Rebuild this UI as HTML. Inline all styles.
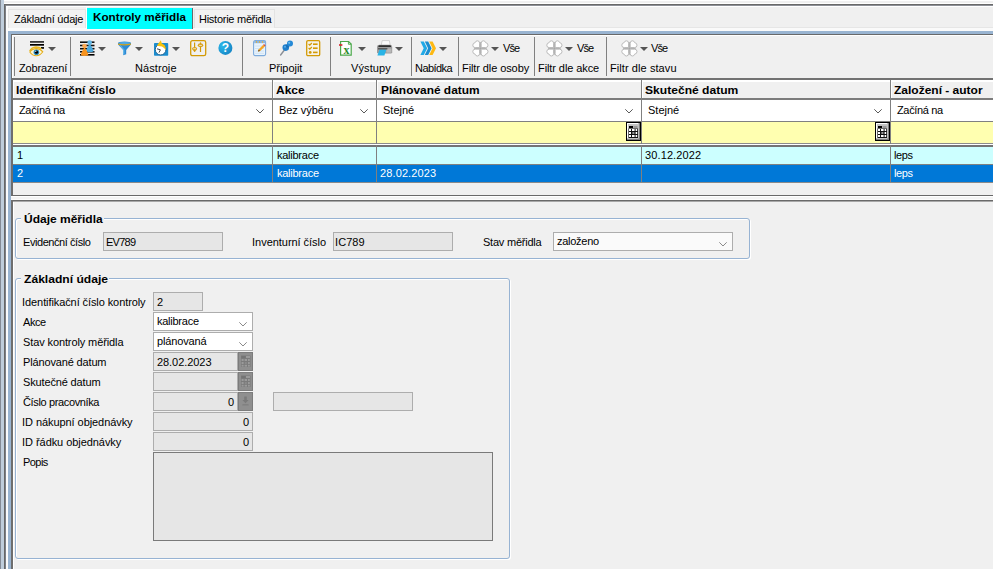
<!DOCTYPE html>
<html lang="cs">
<head>
<meta charset="utf-8">
<title>Kontroly měřidla</title>
<style>
html,body{margin:0;padding:0;background:#f0f0f0;}
body{width:993px;height:569px;overflow:hidden;position:relative;font-family:"Liberation Sans",sans-serif;font-size:11px;color:#000;}
#root{position:absolute;left:0;top:0;width:993px;height:569px;overflow:hidden;background:#f0f0f0;}
.a{position:absolute;}
.t{position:absolute;white-space:nowrap;line-height:13px;height:13px;letter-spacing:-0.15px;}
.b{font-weight:bold;font-size:11px;letter-spacing:0;transform-origin:0 50%;margin-top:-0.3135px;}
.w{color:#fff;}
.sep{position:absolute;top:37px;width:1px;height:39px;background:#808080;}
.arr{position:absolute;top:47px;width:0;height:0;border-left:4px solid transparent;border-right:4px solid transparent;border-top:4px solid #555;}
.vl{position:absolute;width:1px;background:#808080;}
.hl{position:absolute;height:1px;background:#808080;}
.inp{position:absolute;box-sizing:border-box;border:1px solid #adadad;background:#e6e6e6;height:19px;}
.cmb{position:absolute;box-sizing:border-box;border:1px solid #adadad;background:#fff;height:19px;}
.gb{position:absolute;box-sizing:border-box;border:1px solid #97b3d3;border-radius:3px;box-shadow:1px 1px 0 #fff, inset 1px 1px 0 #fff;}
.gbt{position:absolute;background:#f0f0f0;height:13px;}
svg{position:absolute;overflow:visible;}
</style>
</head>
<body>
<div id="root">

<!-- window frame left -->
<div class="a" style="left:0;top:0;width:1px;height:569px;background:#848b96"></div>
<div class="a" style="left:1px;top:0;width:3px;height:569px;background:#bfcddb"></div>
<div class="a" style="left:4px;top:0;width:989px;height:1px;background:#fff"></div>
<div class="a" style="left:4px;top:3px;width:989px;height:1px;background:#fff"></div>
<div class="a" style="left:4px;top:4px;width:989px;height:1px;background:#696969"></div>
<div class="a" style="left:4px;top:5px;width:989px;height:1px;background:#8d9097"></div>
<div class="a" style="left:4px;top:4px;width:1px;height:565px;background:#676767"></div>
<div class="a" style="left:5px;top:5px;width:1px;height:564px;background:#7c8087"></div>
<div class="a" style="left:6px;top:6px;width:2px;height:563px;background:#fbfbfb"></div>

<!-- tabs -->
<div class="a" style="left:6px;top:6px;width:987px;height:1px;background:#fff"></div>
<div class="a" style="left:8px;top:27px;width:985px;height:1px;background:#e6e6e6"></div>
<div class="a" style="left:8px;top:28px;width:985px;height:3px;background:#fafafa"></div>
<div class="a" style="left:8px;top:9px;width:78px;height:19px;box-sizing:border-box;border:1px solid #e3e3e3;border-bottom:none;background:#f2f2f2"></div>
<div class="a" style="left:86px;top:7px;width:1px;height:22px;background:#fff"></div>
<div class="a" style="left:87px;top:8px;width:105px;height:21px;background:#00ffff"></div>
<div class="a" style="left:192px;top:8px;width:1px;height:21px;background:#696969"></div>
<div class="a" style="left:194px;top:9px;width:81px;height:19px;box-sizing:border-box;border:1px solid #e3e3e3;border-bottom:none;background:#f2f2f2"></div>

<!-- blue band -->
<div class="a" style="left:8px;top:31px;width:985px;height:3px;background:#99b4d1"></div>
<div class="a" style="left:8px;top:31px;width:3px;height:538px;background:#99b4d1"></div>
<div class="a" style="left:11px;top:34px;width:982px;height:1px;background:#696969"></div>
<div class="a" style="left:12px;top:35px;width:981px;height:1px;background:#fff"></div>
<div class="a" style="left:11px;top:34px;width:1px;height:44px;background:#6e6e6e"></div>
<div class="a" style="left:12px;top:35px;width:1px;height:43px;background:#fff"></div>
<div class="a" style="left:11px;top:78px;width:2px;height:118px;background:#6e6e6e"></div>

<!-- TOOLBAR -->
<div id="toolbar">
<div class="sep" style="left:14px"></div>
<div class="sep" style="left:70px"></div>
<div class="sep" style="left:242px"></div>
<div class="sep" style="left:330px"></div>
<div class="sep" style="left:411px"></div>
<div class="sep" style="left:458px"></div>
<div class="sep" style="left:534px"></div>
<div class="sep" style="left:606px"></div>

<div class="arr" style="left:48px"></div>
<div class="arr" style="left:98px"></div>
<div class="arr" style="left:135px"></div>
<div class="arr" style="left:172px"></div>
<div class="arr" style="left:358px"></div>
<div class="arr" style="left:395px"></div>
<div class="arr" style="left:439px"></div>
<div class="arr" style="left:491px"></div>
<div class="arr" style="left:565px"></div>
<div class="arr" style="left:640px"></div>

<!--ICONS_START-->
<!-- eye / view -->
<svg style="left:29px;top:40px" width="16" height="17" viewBox="0 0 16 17">
<rect x="1" y="1" width="14" height="1.8" fill="#3a3a3a"/>
<rect x="1" y="4" width="14" height="1.7" fill="#000"/>
<rect x="12" y="7" width="3" height="1.8" fill="#111"/>
<path d="M0.8,11.2 Q2.6,7.2 7,7 Q10.6,7 12.4,9" fill="none" stroke="#e8b820" stroke-width="1.6"/>
<path d="M0.8,12 Q3.4,8.6 7.4,8.6 Q11.4,8.8 13.8,11.8 Q11,15.8 7.2,15.8 Q3.4,15.8 0.8,12 Z" fill="#fdf6d8" stroke="#e3ae1c" stroke-width="1.1"/>
<circle cx="7.4" cy="12.2" r="2.8" fill="#2a8fc4"/>
<circle cx="7.5" cy="12.2" r="1.6" fill="#000"/>
<circle cx="6.8" cy="11.3" r="0.6" fill="#fff"/>
</svg>
<!-- group / people -->
<svg style="left:79px;top:40px" width="16" height="17" viewBox="0 0 16 17">
<rect x="1" y="1.4" width="14.5" height="1.6" fill="#111"/>
<rect x="1" y="4.7" width="14.5" height="1.6" fill="#111"/>
<rect x="1" y="7.9" width="14.5" height="1.6" fill="#111"/>
<rect x="1" y="11" width="14.5" height="1.6" fill="#111"/>
<rect x="1" y="14" width="14.5" height="1.6" fill="#000"/>
<circle cx="10.7" cy="2.5" r="2.3" fill="#62b7e6"/>
<path d="M10.7,3.6 C9.2,6 7.6,8.6 7.3,11.6 Q10.7,13 14.5,11.6 C14,8.6 12.2,6 10.7,3.6 Z" fill="#4aa9df"/>
<circle cx="5.5" cy="6" r="2.3" fill="#fcaa55"/>
<path d="M5.5,7.2 C4.2,9.6 2.2,12.4 1.7,15.2 Q5.5,16.6 9.4,15.2 C9,12.4 7,9.6 5.5,7.2 Z" fill="#f7931e"/>
</svg>
<!-- funnel -->
<svg style="left:117px;top:40px" width="16" height="17" viewBox="0 0 16 17">
<path d="M1,3.3 Q1,1.6 7.5,1.6 Q14,1.6 14,3.3 L14,4.6 L9.2,10 L9.2,14.2 L6.2,15.3 L6.2,10 L1,4.6 Z" fill="#2d8ad4"/>
<path d="M3,5.2 L6.8,9.6 L6.8,14.4" fill="none" stroke="#6cc0ee" stroke-width="1"/>
<ellipse cx="7.5" cy="3" rx="6" ry="1.1" fill="#4fa9e4"/>
<path d="M1.1,4.1 Q7.5,5.6 13.9,4.1" fill="none" stroke="#d6a319" stroke-width="1.1"/>
</svg>
<!-- clock w/ arrow -->
<svg style="left:153px;top:40px" width="17" height="17" viewBox="0 0 17 17">
<rect x="1" y="3" width="14.2" height="12.8" rx="0.8" fill="#1b8dcf"/>
<circle cx="7.6" cy="9.6" r="5.3" fill="#fff" stroke="#0f4f80" stroke-width="0.8"/>
<path d="M4,8.8 L7.4,9.8 L6,12.6" fill="none" stroke="#333" stroke-width="0.9"/>
<path d="M7.8,0.3 L3.8,5.8 L7,6.2 C9.8,6.4 11.4,7.8 12.6,10 C13.2,6.6 11.8,4.2 8.8,3.4 Z" fill="#f6c20b"/>
</svg>
<!-- settings sliders -->
<svg style="left:190px;top:40px" width="17" height="17" viewBox="0 0 17 17">
<rect x="0.7" y="0.7" width="15" height="15" rx="1.8" fill="none" stroke="#d39a06" stroke-width="1.3"/>
<line x1="4.6" y1="2.4" x2="4.6" y2="11.6" stroke="#d39a06" stroke-width="1.2"/>
<ellipse cx="4.6" cy="8.8" rx="2.6" ry="1.7" fill="#d8a21a"/>
<rect x="3.2" y="8.3" width="2.8" height="0.9" fill="#f5ead0"/>
<path d="M2.8,10.2 L4.6,12 L6.4,10.2 Z" fill="#d39a06"/>
<line x1="10.5" y1="2.4" x2="10.5" y2="12" stroke="#d39a06" stroke-width="1.2"/>
<ellipse cx="10.5" cy="5.3" rx="2.7" ry="2" fill="#d8a21a"/>
<rect x="9.1" y="4.9" width="2.8" height="0.9" fill="#f5ead0"/>
</svg>
<!-- help -->
<svg style="left:218px;top:40px" width="16" height="17" viewBox="0 0 16 17">
<defs><radialGradient id="hg" cx="0.3" cy="0.35" r="0.8"><stop offset="0" stop-color="#2bb8ea"/><stop offset="1" stop-color="#1683c4"/></radialGradient></defs>
<circle cx="7.4" cy="7.9" r="7" fill="url(#hg)"/>
<text x="7.4" y="12.2" text-anchor="middle" font-family="Liberation Sans, sans-serif" font-weight="bold" font-size="12" fill="#fff">?</text>
</svg>
<!-- note with pencil -->
<svg style="left:253px;top:40px" width="14" height="17" viewBox="0 0 14 17">
<rect x="0.6" y="0.6" width="12" height="15" rx="1.5" fill="#eaf4fc" stroke="#7dabdc" stroke-width="1.1"/>
<rect x="1.2" y="1" width="10.8" height="2.2" fill="#8eb6df"/>
<rect x="3" y="1.2" width="1" height="1.6" fill="#e0b040"/><rect x="6" y="1.2" width="1" height="1.6" fill="#e0b040"/><rect x="9" y="1.2" width="1" height="1.6" fill="#e0b040"/>
<path d="M2,6 H11 M2,8.5 H11 M2,11 H11 M2,13.3 H11" stroke="#c9e0f4" stroke-width="0.8"/>
<path d="M5,11.6 L5.6,9.4 L10.2,4.8 L11.8,6.4 L7.2,11 Z" fill="#f5a623"/>
<path d="M10.2,4.8 L11,4 L12.6,5.6 L11.8,6.4 Z" fill="#d9483b"/>
<path d="M5,11.6 L5.6,9.4 L7.2,11 Z" fill="#6b4a1e"/>
</svg>
<!-- pin -->
<svg style="left:279px;top:40px" width="16" height="17" viewBox="0 0 16 17">
<path d="M1.6,15 L5.6,9.8" stroke="#8a8f96" stroke-width="1.4" stroke-linecap="round"/>
<circle cx="6.8" cy="7.6" r="3.3" fill="#1f7fcc"/>
<path d="M7.6,6.8 L10.2,4.2" stroke="#1a6fb8" stroke-width="3.2"/>
<circle cx="11" cy="3.6" r="3" fill="#2489d6"/>
<circle cx="10.2" cy="2.8" r="1.1" fill="#6cbcf0"/>
<circle cx="6" cy="6.8" r="1" fill="#5aaee8"/>
</svg>
<!-- checklist -->
<svg style="left:306px;top:40px" width="15" height="17" viewBox="0 0 15 17">
<rect x="0.7" y="0.7" width="13" height="15" rx="1.3" fill="#f6f3ea" stroke="#d39a06" stroke-width="1.3"/>
<path d="M2.6,4 L3.8,5.2 L5.8,3" fill="none" stroke="#d39a06" stroke-width="1.2"/>
<path d="M2.6,8 L3.8,9.2 L5.8,7" fill="none" stroke="#d39a06" stroke-width="1.2"/>
<circle cx="4.2" cy="12.4" r="1.4" fill="#d39a06"/>
<rect x="7" y="3.4" width="4.6" height="1.6" fill="#d39a06"/>
<rect x="7" y="7.4" width="4.6" height="1.6" fill="#d39a06"/>
<rect x="7" y="11.6" width="4.6" height="1.6" fill="#d39a06"/>
</svg>
<!-- excel -->
<svg style="left:338px;top:40px" width="15" height="17" viewBox="0 0 15 17">
<path d="M2.6,1.5 H10.6 L13.2,4.1 V15.2 H2.6 Z" fill="#fff" stroke="#4aa84a" stroke-width="1.2"/>
<path d="M10.4,1.6 V4.3 H13" fill="none" stroke="#4aa84a" stroke-width="0.9"/>
<rect x="1" y="4.2" width="3.4" height="1.6" fill="#d8232a"/>
<text x="8.4" y="14.2" text-anchor="middle" font-family="Liberation Serif, serif" font-weight="bold" font-size="12" fill="#2e8b2e">x</text>
</svg>
<!-- printer -->
<svg style="left:376px;top:40px" width="17" height="17" viewBox="0 0 17 17">
<path d="M6.2,0.6 H13.4 L14.2,5.4 H5.2 Z" fill="#fafafa" stroke="#b8b8b8" stroke-width="0.6"/>
<path d="M1,7 Q1,4.8 3.4,4.8 H14 Q16.2,4.8 16.2,7 V12.2 Q16.2,13.6 14.6,13.6 H2.6 Q1,13.6 1,12.2 Z" fill="#9c9c9c"/>
<path d="M2.4,6.2 Q2.4,5.2 3.6,5.2 H13.8 Q15,5.2 15,6.2 V7 H2.4 Z" fill="#2e2e2e"/>
<rect x="10.4" y="8.6" width="5" height="4" fill="#b9b9b9"/>
<path d="M3.6,9.4 H10.4 L8.4,15.6 H1.4 Z" fill="#29b4e6"/>
<path d="M2,8.2 H11.4 V9.4 H2 Z" fill="#4a4a4a"/>
</svg>
<!-- chevrons -->
<svg style="left:420px;top:40px" width="17" height="17" viewBox="0 0 17 17">
<path d="M0.4,1.6 H3.8 L7.2,8.3 L3.8,15 H0.4 L3.7,8.3 Z" fill="#21a9e6"/>
<path d="M4.8,1.6 H8.2 L11.6,8.3 L8.2,15 H4.8 L8.1,8.3 Z" fill="#1c8dd0"/>
<path d="M9.2,1.6 H12.6 L16,8.3 L12.6,15 H9.2 L12.5,8.3 Z" fill="#fdb913"/>
</svg>
<svg style="left:472px;top:40px" width="17" height="17" viewBox="0 0 17 17">
<g fill="#fff" stroke="#b4b4b4" stroke-width="0.9">
<path d="M7.6,7.6 L7.6,3.2 Q7.6,0.8 5.4,0.8 Q3.6,0.8 3.2,2.6 Q0.8,3 0.8,5.2 Q0.8,7.6 3.2,7.6 Z"/>
<path d="M9.2,7.6 L9.2,3.2 Q9.2,0.8 11.4,0.8 Q13.2,0.8 13.6,2.6 Q16,3 16,5.2 Q16,7.6 13.6,7.6 Z"/>
<path d="M7.6,9.2 L7.6,13.6 Q7.6,16 5.4,16 Q3.6,16 3.2,14.2 Q0.8,13.8 0.8,11.6 Q0.8,9.2 3.2,9.2 Z"/>
<path d="M9.2,9.2 L9.2,13.6 Q9.2,16 11.4,16 Q13.2,16 13.6,14.2 Q16,13.8 16,11.6 Q16,9.2 13.6,9.2 Z"/>
</g>
<path d="M8.4,2 V14.8 M2,8.4 H14.8" stroke="#9c9c9c" stroke-width="0.7"/>
</svg>
<svg style="left:546px;top:40px" width="17" height="17" viewBox="0 0 17 17">
<g fill="#fff" stroke="#b4b4b4" stroke-width="0.9">
<path d="M7.6,7.6 L7.6,3.2 Q7.6,0.8 5.4,0.8 Q3.6,0.8 3.2,2.6 Q0.8,3 0.8,5.2 Q0.8,7.6 3.2,7.6 Z"/>
<path d="M9.2,7.6 L9.2,3.2 Q9.2,0.8 11.4,0.8 Q13.2,0.8 13.6,2.6 Q16,3 16,5.2 Q16,7.6 13.6,7.6 Z"/>
<path d="M7.6,9.2 L7.6,13.6 Q7.6,16 5.4,16 Q3.6,16 3.2,14.2 Q0.8,13.8 0.8,11.6 Q0.8,9.2 3.2,9.2 Z"/>
<path d="M9.2,9.2 L9.2,13.6 Q9.2,16 11.4,16 Q13.2,16 13.6,14.2 Q16,13.8 16,11.6 Q16,9.2 13.6,9.2 Z"/>
</g>
<path d="M8.4,2 V14.8 M2,8.4 H14.8" stroke="#9c9c9c" stroke-width="0.7"/>
</svg>
<svg style="left:621px;top:40px" width="17" height="17" viewBox="0 0 17 17">
<g fill="#fff" stroke="#b4b4b4" stroke-width="0.9">
<path d="M7.6,7.6 L7.6,3.2 Q7.6,0.8 5.4,0.8 Q3.6,0.8 3.2,2.6 Q0.8,3 0.8,5.2 Q0.8,7.6 3.2,7.6 Z"/>
<path d="M9.2,7.6 L9.2,3.2 Q9.2,0.8 11.4,0.8 Q13.2,0.8 13.6,2.6 Q16,3 16,5.2 Q16,7.6 13.6,7.6 Z"/>
<path d="M7.6,9.2 L7.6,13.6 Q7.6,16 5.4,16 Q3.6,16 3.2,14.2 Q0.8,13.8 0.8,11.6 Q0.8,9.2 3.2,9.2 Z"/>
<path d="M9.2,9.2 L9.2,13.6 Q9.2,16 11.4,16 Q13.2,16 13.6,14.2 Q16,13.8 16,11.6 Q16,9.2 13.6,9.2 Z"/>
</g>
<path d="M8.4,2 V14.8 M2,8.4 H14.8" stroke="#9c9c9c" stroke-width="0.7"/>
</svg>
<!--ICONS_END-->
</div>

<!-- GRID -->
<div id="grid">
<div class="a" style="left:13px;top:78px;width:980px;height:2px;background:#727272"></div>
<div class="a" style="left:13px;top:80px;width:980px;height:2px;background:#fff"></div>
<div class="a" style="left:13px;top:98px;width:980px;height:2px;background:#7c7c7c"></div>
<div class="a" style="left:13px;top:100px;width:980px;height:21px;background:#fff"></div>
<div class="a" style="left:13px;top:121px;width:980px;height:1px;background:#808080"></div>
<div class="a" style="left:13px;top:122px;width:980px;height:21px;background:#ffffb0"></div>
<div class="a" style="left:13px;top:143px;width:980px;height:1px;background:#8c8c8c"></div>
<div class="a" style="left:13px;top:144px;width:980px;height:1px;background:#fff"></div>
<div class="a" style="left:13px;top:145px;width:980px;height:2px;background:#747474"></div>
<div class="a" style="left:13px;top:147px;width:980px;height:17px;background:#ccffff"></div>
<div class="a" style="left:13px;top:164px;width:980px;height:1px;background:#808080"></div>
<div class="a" style="left:13px;top:165px;width:980px;height:17px;background:#0078d7"></div>
<div class="a" style="left:13px;top:182px;width:980px;height:1px;background:#8a8a8a"></div>
<!-- column separators -->
<div class="vl" style="left:272px;top:80px;height:102px"></div>
<div class="vl" style="left:376px;top:80px;height:102px"></div>
<div class="vl" style="left:641px;top:80px;height:102px"></div>
<div class="vl" style="left:890px;top:80px;height:102px"></div>
<div class="a" style="left:273px;top:80px;width:1px;height:18px;background:#fff"></div>
<div class="a" style="left:377px;top:80px;width:1px;height:18px;background:#fff"></div>
<div class="a" style="left:642px;top:80px;width:1px;height:18px;background:#fff"></div>
<div class="a" style="left:891px;top:80px;width:1px;height:18px;background:#fff"></div>
<div class="a" style="left:13px;top:80px;width:1px;height:18px;background:#fff"></div>
<div class="a" style="left:13px;top:144px;width:980px;height:1px;background:#fff"></div>
<!-- header texts -->
<!-- filter row -->
<!--CH_START-->
<svg style="left:256px;top:109px" width="8" height="5" viewBox="0 0 8 5"><path d="M0.3,0.3 L4,4 L7.7,0.3" fill="none" stroke="#5a5a5a" stroke-width="1"/></svg>
<svg style="left:360px;top:109px" width="8" height="5" viewBox="0 0 8 5"><path d="M0.3,0.3 L4,4 L7.7,0.3" fill="none" stroke="#5a5a5a" stroke-width="1"/></svg>
<svg style="left:625px;top:109px" width="8" height="5" viewBox="0 0 8 5"><path d="M0.3,0.3 L4,4 L7.7,0.3" fill="none" stroke="#5a5a5a" stroke-width="1"/></svg>
<svg style="left:874px;top:109px" width="8" height="5" viewBox="0 0 8 5"><path d="M0.3,0.3 L4,4 L7.7,0.3" fill="none" stroke="#5a5a5a" stroke-width="1"/></svg>
<svg style="left:626px;top:122px" width="15" height="19" viewBox="0 0 15 19"><rect x="0" y="0" width="15" height="19" fill="#000"/><rect x="1" y="1" width="13" height="17" fill="#808080"/><rect x="1" y="1" width="11.5" height="15.5" fill="#fff"/><rect x="2" y="2" width="10.5" height="14.5" fill="#c4c4c4"/><rect x="3" y="4" width="4" height="2" fill="#000"/><rect x="7.5" y="4" width="4" height="2" fill="#9a9a9a"/><rect x="2.5" y="6.5" width="9.5" height="9.5" fill="#111"/><rect x="3" y="7" width="2" height="2" fill="#fff"/><rect x="6" y="7" width="2.6" height="2" fill="#fff"/><rect x="9.6" y="7" width="1.6" height="2" fill="#fff"/><rect x="3" y="10" width="2" height="2" fill="#fff"/><rect x="6.4" y="10" width="2" height="2" fill="#999"/><rect x="9.6" y="10" width="1.6" height="2" fill="#fff"/><rect x="3" y="13" width="2" height="2" fill="#fff"/><rect x="6" y="13" width="2.6" height="2" fill="#fff"/><rect x="9.6" y="13" width="1.6" height="2" fill="#fff"/></svg>
<svg style="left:875px;top:122px" width="15" height="19" viewBox="0 0 15 19"><rect x="0" y="0" width="15" height="19" fill="#000"/><rect x="1" y="1" width="13" height="17" fill="#808080"/><rect x="1" y="1" width="11.5" height="15.5" fill="#fff"/><rect x="2" y="2" width="10.5" height="14.5" fill="#c4c4c4"/><rect x="3" y="4" width="4" height="2" fill="#000"/><rect x="7.5" y="4" width="4" height="2" fill="#9a9a9a"/><rect x="2.5" y="6.5" width="9.5" height="9.5" fill="#111"/><rect x="3" y="7" width="2" height="2" fill="#fff"/><rect x="6" y="7" width="2.6" height="2" fill="#fff"/><rect x="9.6" y="7" width="1.6" height="2" fill="#fff"/><rect x="3" y="10" width="2" height="2" fill="#fff"/><rect x="6.4" y="10" width="2" height="2" fill="#999"/><rect x="9.6" y="10" width="1.6" height="2" fill="#fff"/><rect x="3" y="13" width="2" height="2" fill="#fff"/><rect x="6" y="13" width="2.6" height="2" fill="#fff"/><rect x="9.6" y="13" width="1.6" height="2" fill="#fff"/></svg>
<!--CH_END-->
<!-- data rows -->
</div>

<!-- splitter -->
<div class="a" style="left:11px;top:195px;width:982px;height:1px;background:#696969"></div>
<div class="a" style="left:11px;top:196px;width:982px;height:4px;background:#f4f4f4"></div>
<div class="a" style="left:11px;top:196px;width:982px;height:1px;background:#fff"></div>
<div class="a" style="left:11px;top:199px;width:982px;height:1px;background:#fbfbfb"></div>
<div class="a" style="left:11px;top:200px;width:982px;height:1px;background:#696969"></div>
<div class="a" style="left:11px;top:201px;width:982px;height:1px;background:#a8a8a8"></div>
<div class="a" style="left:11px;top:200px;width:2px;height:369px;background:#6e6e6e"></div>
<div class="a" style="left:13px;top:202px;width:1px;height:367px;background:#fff"></div>

<!-- GROUP 1 -->
<div id="g1">
<div class="gb" style="left:15px;top:218px;width:735px;height:41px"></div>
<div class="gbt" style="left:21px;top:212px;width:83px"></div>
<div class="inp" style="left:103px;top:232px;width:120px"></div>
<div class="inp" style="left:333px;top:232px;width:120px"></div>
<div class="cmb" style="left:553px;top:232px;width:180px;background:#fafafa"></div>
</div>

<!-- GROUP 2 -->
<div id="g2">
<div class="gb" style="left:15px;top:278px;width:495px;height:281px"></div>
<div class="gbt" style="left:21px;top:272px;width:88px"></div>

<div class="inp" style="left:153px;top:292px;width:50px"></div>

<div class="cmb" style="left:153px;top:312px;width:100px"></div>

<div class="cmb" style="left:153px;top:332px;width:100px"></div>

<div class="inp" style="left:153px;top:352px;width:85px"></div>

<div class="inp" style="left:153px;top:372px;width:85px"></div>

<div class="inp" style="left:153px;top:392px;width:85px"></div>
<div class="inp" style="left:273px;top:392px;width:140px"></div>

<div class="inp" style="left:153px;top:412px;width:100px"></div>

<div class="inp" style="left:153px;top:432px;width:100px"></div>

<div class="inp" style="left:153px;top:452px;width:340px;height:89px;border-color:#7a7a7a"></div>
</div>

<!--FW_START-->
<svg style="left:719px;top:242px" width="8" height="5" viewBox="0 0 8 5"><path d="M0.3,0.3 L4,4 L7.7,0.3" fill="none" stroke="#8a8a8a" stroke-width="1"/></svg>
<svg style="left:239px;top:322px" width="8" height="5" viewBox="0 0 8 5"><path d="M0.3,0.3 L4,4 L7.7,0.3" fill="none" stroke="#8a8a8a" stroke-width="1"/></svg>
<svg style="left:239px;top:342px" width="8" height="5" viewBox="0 0 8 5"><path d="M0.3,0.3 L4,4 L7.7,0.3" fill="none" stroke="#8a8a8a" stroke-width="1"/></svg>
<svg style="left:238px;top:352px" width="15" height="19" viewBox="0 0 15 19"><rect x="0" y="0" width="15" height="19" fill="#7c7c7c"/><rect x="1" y="1" width="13" height="17" fill="#8f8f8f"/><rect x="3" y="3.5" width="9.5" height="11.5" fill="#7b7b7b"/><rect x="3.5" y="4" width="4" height="2" fill="#747474"/><rect x="8" y="4" width="4" height="2" fill="#9a9a9a"/><rect x="3.6" y="7" width="2" height="2" fill="#9b9b9b"/><rect x="6.6" y="7" width="2.4" height="2" fill="#9b9b9b"/><rect x="10" y="7" width="1.8" height="2" fill="#9b9b9b"/><rect x="3.6" y="10" width="2" height="2" fill="#9b9b9b"/><rect x="6.8" y="10" width="2" height="2" fill="#8a8a8a"/><rect x="10" y="10" width="1.8" height="2" fill="#9b9b9b"/><rect x="3.6" y="12.8" width="2" height="1.8" fill="#9b9b9b"/><rect x="6.6" y="12.8" width="2.4" height="1.8" fill="#9b9b9b"/><rect x="10" y="12.8" width="1.8" height="1.8" fill="#9b9b9b"/></svg>
<svg style="left:238px;top:372px" width="15" height="19" viewBox="0 0 15 19"><rect x="0" y="0" width="15" height="19" fill="#7c7c7c"/><rect x="1" y="1" width="13" height="17" fill="#8f8f8f"/><rect x="3" y="3.5" width="9.5" height="11.5" fill="#7b7b7b"/><rect x="3.5" y="4" width="4" height="2" fill="#747474"/><rect x="8" y="4" width="4" height="2" fill="#9a9a9a"/><rect x="3.6" y="7" width="2" height="2" fill="#9b9b9b"/><rect x="6.6" y="7" width="2.4" height="2" fill="#9b9b9b"/><rect x="10" y="7" width="1.8" height="2" fill="#9b9b9b"/><rect x="3.6" y="10" width="2" height="2" fill="#9b9b9b"/><rect x="6.8" y="10" width="2" height="2" fill="#8a8a8a"/><rect x="10" y="10" width="1.8" height="2" fill="#9b9b9b"/><rect x="3.6" y="12.8" width="2" height="1.8" fill="#9b9b9b"/><rect x="6.6" y="12.8" width="2.4" height="1.8" fill="#9b9b9b"/><rect x="10" y="12.8" width="1.8" height="1.8" fill="#9b9b9b"/></svg>
<svg style="left:238px;top:392px" width="15" height="19" viewBox="0 0 15 19"><rect x="0" y="0" width="15" height="19" fill="#7c7c7c"/><rect x="1" y="1" width="13" height="17" fill="#8f8f8f"/><path d="M6.2,4.5 H8.8 V8 H10.6 L7.5,11.2 L4.4,8 H6.2 Z" fill="#7a7a7a"/><rect x="4.4" y="12.4" width="6.2" height="1" fill="#7a7a7a"/></svg>
<!--FW_END-->
<div class="t" style="left:14.00px;top:13px;letter-spacing:-0.212px">Základní údaje</div>
<div class="t b" style="left:93.00px;top:11px;transform:scaleX(1.0635)">Kontroly měřidla</div>
<div class="t" style="left:199.00px;top:13px;letter-spacing:-0.257px">Historie měřidla</div>
<div class="t" style="left:19.00px;top:62px;letter-spacing:-0.150px">Zobrazení</div>
<div class="t" style="left:135.00px;top:62px;letter-spacing:0.079px">Nástroje</div>
<div class="t" style="left:269.00px;top:62px;letter-spacing:-0.036px">Připojit</div>
<div class="t" style="left:351.00px;top:62px;letter-spacing:0.117px">Výstupy</div>
<div class="t" style="left:415.00px;top:62px;letter-spacing:-0.550px">Nabídka</div>
<div class="t" style="left:462.00px;top:62px;letter-spacing:-0.093px">Filtr dle osoby</div>
<div class="t" style="left:538.00px;top:62px;letter-spacing:-0.088px">Filtr dle akce</div>
<div class="t" style="left:610.00px;top:62px;letter-spacing:0.079px">Filtr dle stavu</div>
<div class="t" style="left:503.00px;top:42px;letter-spacing:-0.950px">Vše</div>
<div class="t" style="left:577.00px;top:42px;letter-spacing:-0.950px">Vše</div>
<div class="t" style="left:651.00px;top:42px;letter-spacing:-0.950px">Vše</div>
<div class="t b" style="left:16.00px;top:84px;transform:scaleX(1.0810)">Identifikační číslo</div>
<div class="t b" style="left:276.00px;top:84px;transform:scaleX(1.0888)">Akce</div>
<div class="t b" style="left:381.00px;top:84px;transform:scaleX(1.0826)">Plánované datum</div>
<div class="t b" style="left:645.00px;top:84px;transform:scaleX(1.0988)">Skutečné datum</div>
<div class="t b" style="left:894.00px;top:84px;transform:scaleX(1.0899)">Založení - autor</div>
<div class="t" style="left:19.00px;top:104px;letter-spacing:-0.350px">Začíná na</div>
<div class="t" style="left:279.00px;top:104px;letter-spacing:-0.061px">Bez výběru</div>
<div class="t" style="left:383.00px;top:104px;letter-spacing:0.010px">Stejné</div>
<div class="t" style="left:648.00px;top:104px;letter-spacing:0.010px">Stejné</div>
<div class="t" style="left:897.00px;top:104px;letter-spacing:-0.350px">Začíná na</div>
<div class="t" style="left:17.00px;top:149px;letter-spacing:-0.150px">1</div>
<div class="t" style="left:277.00px;top:149px;letter-spacing:-0.250px">kalibrace</div>
<div class="t" style="left:645.00px;top:149px;letter-spacing:0.117px">30.12.2022</div>
<div class="t" style="left:894.00px;top:149px;letter-spacing:-0.417px">leps</div>
<div class="t w" style="left:17.00px;top:167px;letter-spacing:-0.150px">2</div>
<div class="t w" style="left:277.00px;top:167px;letter-spacing:-0.250px">kalibrace</div>
<div class="t w" style="left:380.00px;top:167px;letter-spacing:0.117px">28.02.2023</div>
<div class="t w" style="left:894.00px;top:167px;letter-spacing:-0.417px">leps</div>
<div class="t b" style="left:24.00px;top:213px;transform:scaleX(1.0904)">Údaje měřidla</div>
<div class="t" style="left:23.00px;top:236px;letter-spacing:-0.436px">Evidenční číslo</div>
<div class="t" style="left:106.00px;top:236px;letter-spacing:-0.750px">EV789</div>
<div class="t" style="left:252.10px;top:236px;letter-spacing:-0.043px">Inventurní číslo</div>
<div class="t" style="left:335.10px;top:236px;letter-spacing:0.050px">IC789</div>
<div class="t" style="left:483.00px;top:236px;letter-spacing:-0.223px">Stav měřidla</div>
<div class="t" style="left:557.00px;top:235px;letter-spacing:-0.264px">založeno</div>
<div class="t b" style="left:24.00px;top:273px;transform:scaleX(1.1004)">Základní údaje</div>
<div class="t" style="left:22.10px;top:296px;letter-spacing:-0.091px">Identifikační číslo kontroly</div>
<div class="t" style="left:157.00px;top:296px;letter-spacing:-0.150px">2</div>
<div class="t" style="left:23.00px;top:316px;letter-spacing:-0.417px">Akce</div>
<div class="t" style="left:157.00px;top:315px;letter-spacing:-0.250px">kalibrace</div>
<div class="t" style="left:23.00px;top:336px;letter-spacing:-0.110px">Stav kontroly měřidla</div>
<div class="t" style="left:157.00px;top:335px;letter-spacing:-0.150px">plánovaná</div>
<div class="t" style="left:23.00px;top:356px;letter-spacing:-0.150px">Plánované datum</div>
<div class="t" style="left:157.00px;top:356px;letter-spacing:-0.061px">28.02.2023</div>
<div class="t" style="left:23.00px;top:376px;letter-spacing:-0.150px">Skutečné datum</div>
<div class="t" style="left:23.00px;top:396px;letter-spacing:-0.363px">Číslo pracovníka</div>
<div class="t" style="left:228.00px;top:396px;letter-spacing:-0.150px">0</div>
<div class="t" style="left:22.10px;top:416px;letter-spacing:-0.070px">ID nákupní objednávky</div>
<div class="t" style="left:243.00px;top:416px;letter-spacing:-0.150px">0</div>
<div class="t" style="left:22.10px;top:436px;letter-spacing:-0.061px">ID řádku objednávky</div>
<div class="t" style="left:243.00px;top:436px;letter-spacing:-0.150px">0</div>
<div class="t" style="left:23.00px;top:456px;letter-spacing:-0.550px">Popis</div>
</div>
</body>
</html>
